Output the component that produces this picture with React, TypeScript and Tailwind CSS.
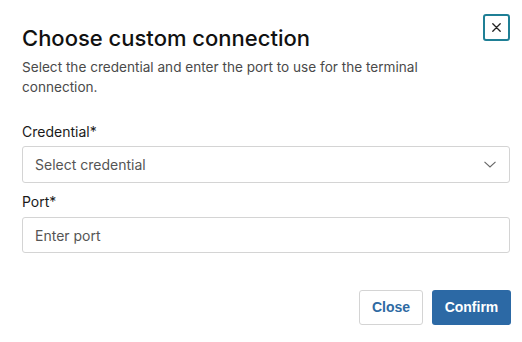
import React from "react";

export default function App() {
  return (
    <div className="w-[522px] h-[342px] bg-white relative" style={{ fontFamily: "Inter, 'Noto Sans', sans-serif" }}>
      <button className="absolute left-[483px] top-[14px] w-[27px] h-[27px] border-2 border-[#1f7f95] rounded-[3px] flex items-center justify-center">
        <svg width="9" height="9" viewBox="0 0 9 9" fill="none" stroke="#222" strokeWidth="1.3" strokeLinecap="round">
          <path d="M0.8 0.8L8.2 8.2M8.2 0.8L0.8 8.2" />
        </svg>
      </button>
      <div className="pl-[22px] pr-[12px] pt-[24px]">
        <h1 className="text-[22px] leading-[28px] font-medium text-[#111]">Choose custom connection</h1>
        <p className="mt-[5px] text-[13.6px] leading-[20px] text-[#4a4a4a] max-w-[440px]">
          Select the credential and enter the port to use for the terminal connection.
        </p>
        <label className="block mt-[25px] text-[14px] leading-[20px] text-[#1a1a1a]">Credential*</label>
        <div className="mt-[4px] h-[37px] border border-[#d4d4d4] rounded-[3px] flex items-center justify-between pl-[12px] pr-[13px]">
          <span className="text-[14px] text-[#555]">Select credential</span>
          <svg width="12" height="7" viewBox="0 0 12 7" fill="none" stroke="#666" strokeWidth="1.1">
            <path d="M0.5 0.8L6 6L11.5 0.8" />
          </svg>
        </div>
        <label className="block mt-[9px] text-[14px] leading-[20px] text-[#1a1a1a]">Port*</label>
        <div className="mt-[5px] h-[36px] border border-[#d4d4d4] rounded-[3px] flex items-center pl-[12px]">
          <span className="text-[14px] text-[#555]">Enter port</span>
        </div>
        <div className="mt-[37px] flex justify-end gap-[9px]">
          <button className="h-[35px] w-[64px] border border-[#d4d4d4] rounded-[3px] text-[14px] font-bold text-[#2e6aa3]" style={{ fontFamily: "'Liberation Sans', Arial, sans-serif" }}>Close</button>
          <button className="h-[35px] w-[79px] bg-[#2c69a5] rounded-[3px] text-[14px] font-bold text-white mr-[-1px]" style={{ fontFamily: "'Liberation Sans', Arial, sans-serif" }}>Confirm</button>
        </div>
      </div>
    </div>
  );
}
